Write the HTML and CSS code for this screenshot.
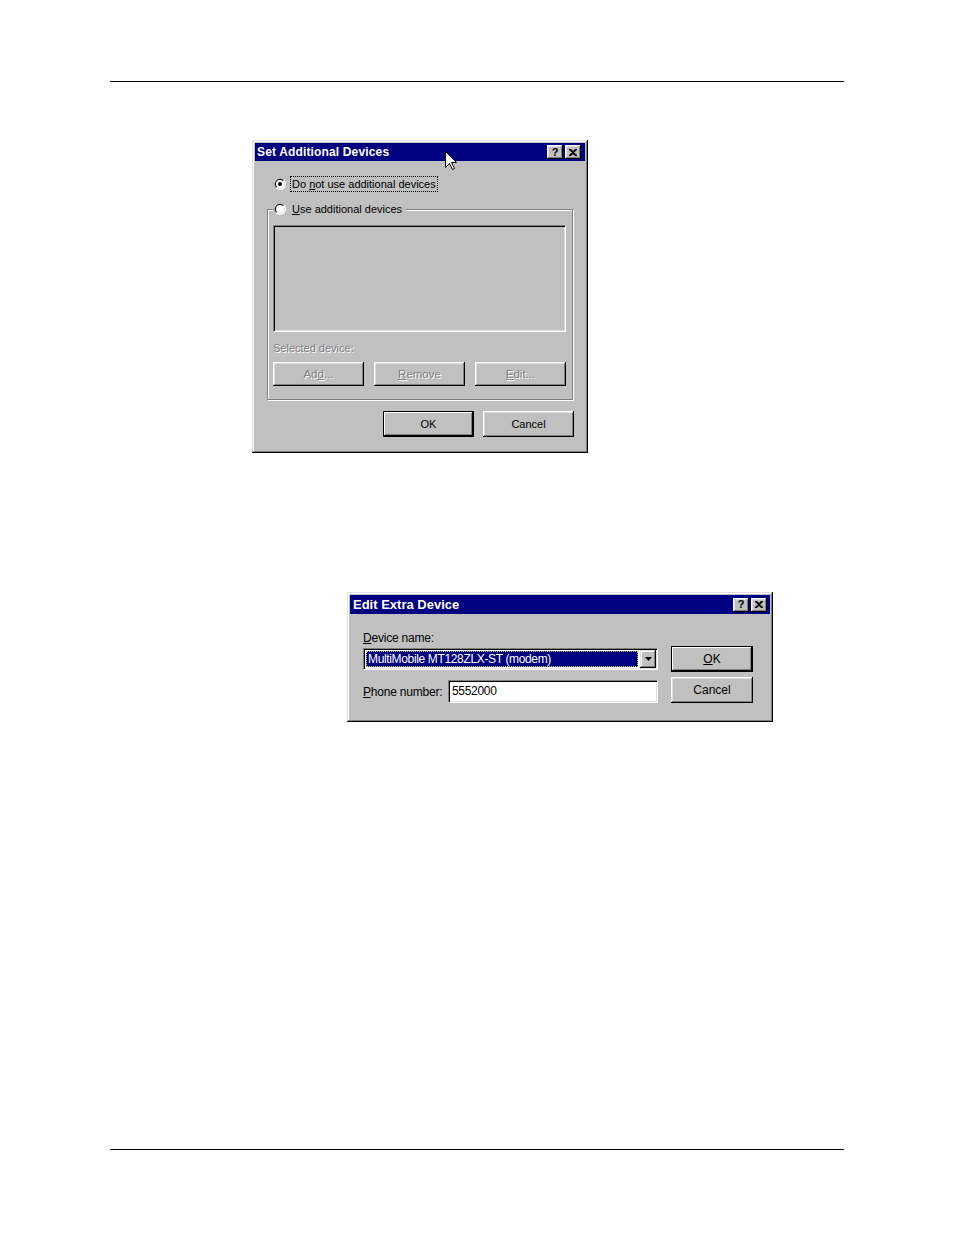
FILE: index.html
```html
<!DOCTYPE html>
<html>
<head>
<meta charset="utf-8">
<link rel="stylesheet" href="styles.css">
</head>
<body>
<div class="page">
  <div class="rule"></div>

  <div class="win win1">
    <div class="titlebar tb1">
      <span class="title">Set Additional Devices</span>
      <span class="tbtns">
        <span class="tbtn q">?</span>
        <span class="tbtn x"><svg width="8" height="7" viewBox="0 0 8 7"><path d="M0 0h2l2 2 2-2h2v1L5 3.5 8 6v1H6L4 5 2 7H0V6l3-2.5L0 1z" fill="#000"/></svg></span>
      </span>
    </div>
    <div class="body1">
      <div class="radio-row">
        <svg class="radio" width="12" height="12" viewBox="0 0 12 12"><circle cx="6" cy="6" r="6" fill="#fff"/><path d="M10.24 1.76A6 6 0 0 0 1.76 10.24Z" fill="#808080"/><circle cx="6" cy="6" r="5" fill="#dfdfdf"/><path d="M9.54 2.46A5 5 0 0 0 2.46 9.54Z" fill="#000"/><circle cx="6" cy="6" r="4" fill="#fff"/><circle cx="6" cy="6" r="2" fill="#000"/></svg>
        <span class="focus">Do <u>n</u>ot use additional devices</span>
      </div>
      <div class="group">
        <div class="legend">
          <svg class="radio" width="12" height="12" viewBox="0 0 12 12"><circle cx="6" cy="6" r="6" fill="#fff"/><path d="M10.24 1.76A6 6 0 0 0 1.76 10.24Z" fill="#808080"/><circle cx="6" cy="6" r="5" fill="#dfdfdf"/><path d="M9.54 2.46A5 5 0 0 0 2.46 9.54Z" fill="#000"/><circle cx="6" cy="6" r="4" fill="#fff"/></svg>
          <span class="lbl"><u>U</u>se additional devices</span>
        </div>
        <div class="listbox"></div>
        <div class="dis-label">Selected device:</div>
        <div class="btnrow">
          <div class="btn disabled">Ad<u>d</u>...</div>
          <div class="btn disabled"><u>R</u>emove</div>
          <div class="btn disabled"><u>E</u>dit...</div>
        </div>
      </div>
      <div class="actions">
        <div class="btn default">OK</div>
        <div class="btn">Cancel</div>
      </div>
    </div>
    <svg class="cursor" width="12" height="20" viewBox="0 0 12 20"><path d="M0.5 0.5V16.5L4.5 12.5L7.5 18.5L9.5 17.5L6.5 11.5H11.5Z" fill="#fff" stroke="#000" stroke-width="1"/></svg>
  </div>

  <div class="win win2">
    <div class="titlebar tb2">
      <span class="title">Edit Extra Device</span>
      <span class="tbtns">
        <span class="tbtn q">?</span>
        <span class="tbtn x"><svg width="8" height="7" viewBox="0 0 8 7"><path d="M0 0h2l2 2 2-2h2v1L5 3.5 8 6v1H6L4 5 2 7H0V6l3-2.5L0 1z" fill="#000"/></svg></span>
      </span>
    </div>
    <div class="body2">
      <div class="leftcol">
        <div class="label"><u>D</u>evice name:</div>
        <div class="combo">
          <div class="sel">MultiMobile MT128ZLX-ST (modem)</div>
          <div class="ddbtn"><svg width="7" height="4" viewBox="0 0 7 4"><path d="M0 0H7L3.5 4Z" fill="#000"/></svg></div>
        </div>
        <div class="phone-row">
          <div class="label plabel"><u>P</u>hone number:</div>
          <div class="input">5552000</div>
        </div>
      </div>
      <div class="rightcol">
        <div class="btn b2 default"><u>O</u>K</div>
        <div class="btn b2 cancel2">Cancel</div>
      </div>
    </div>
  </div>

  <div class="rule bottom"></div>
</div>
</body>
</html>
```

FILE: styles.css
```css
body {
  margin: 0;
  background: #fff;
  font-family: "Liberation Sans", Arial, sans-serif;
}

.page {
  padding-top: 81px;
}

.rule {
  margin-left: 110px;
  width: 734px;
  height: 1px;
  background: #000;
}

.rule.bottom {
  margin-top: 427px;
}

.win {
  position: relative;
  box-sizing: border-box;
  background: #c0c0c0;
  padding: 3px;
  box-shadow: inset -1px -1px #000, inset 1px 1px #dfdfdf, inset -2px -2px #808080, inset 2px 2px #fff;
}

.win1 {
  margin-left: 252px;
  margin-top: 58px;
  width: 336px;
  height: 313px;
}

.win2 {
  margin-left: 347px;
  margin-top: 139px;
  width: 426px;
  height: 130px;
}

.titlebar {
  background: #000080;
  color: #fff;
  display: flex;
  align-items: center;
  justify-content: space-between;
}

.tb1 {
  height: 18px;
  padding: 0 4px 0 2px;
}

.tb1 .title {
  font-size: 12px;
  font-weight: bold;
  letter-spacing: 0.15px;
}

.tb2 {
  height: 19px;
  padding: 0 3px 0 3px;
}

.tb2 .title {
  font-size: 13px;
  font-weight: bold;
}

.tbtns {
  display: flex;
  gap: 2px;
}

.tbtn {
  box-sizing: border-box;
  width: 16px;
  height: 14px;
  background: #c0c0c0;
  color: #000;
  display: flex;
  align-items: center;
  justify-content: center;
  font-size: 11px;
  font-weight: bold;
  box-shadow: inset -1px -1px #000, inset 1px 1px #fff, inset -2px -2px #808080, inset 2px 2px #dfdfdf;
}

.tbtn.q {
  padding-bottom: 1px;
}

.body1 {
  padding: 15px 12px 0 12px;
  font-size: 11px;
  color: #000;
}

.radio-row {
  display: flex;
  align-items: center;
  height: 16px;
  padding-left: 7px;
}

.radio {
  flex: none;
}

.focus {
  margin-left: 4px;
  border: 1px dotted #000;
  padding: 0 1px;
  line-height: 14px;
  white-space: nowrap;
}

.group {
  margin-top: 17px;
  border: 1px solid #808080;
  box-shadow: inset 1px 1px #fff, 1px 1px #fff;
  padding: 0 6px 13px 5px;
}

.legend {
  margin-top: -9px;
  height: 16px;
  display: flex;
  align-items: center;
  width: fit-content;
  background: #c0c0c0;
  padding: 0 4px 0 1px;
}

.legend .lbl {
  margin-left: 6px;
  line-height: 14px;
}

.listbox {
  margin-top: 8px;
  height: 107px;
  box-sizing: border-box;
  background: #c0c0c0;
  border: 1px solid;
  border-color: #808080 #fff #fff #808080;
  box-shadow: inset 1px 1px #000, inset -1px -1px #dfdfdf;
}

.dis-label {
  margin-top: 9px;
  line-height: 14px;
  color: #808080;
  text-shadow: 1px 1px #fff;
}

.btnrow {
  margin-top: 7px;
  display: flex;
  justify-content: space-between;
}

.btn {
  box-sizing: border-box;
  width: 91px;
  height: 24px;
  display: flex;
  align-items: center;
  justify-content: center;
  background: #c0c0c0;
  box-shadow: inset -1px -1px #000, inset 1px 1px #fff, inset -2px -2px #808080, inset 2px 2px #dfdfdf;
}

.btn.disabled {
  color: #808080;
  text-shadow: 1px 1px #fff;
  font-size: 11.5px;
}

.btn.default {
  border: 1px solid #000;
  box-shadow: inset -1px -1px #000, inset 1px 1px #fff, inset -2px -2px #808080;
}

.actions {
  margin-top: 11px;
  margin-right: -1px;
  display: flex;
  justify-content: flex-end;
  gap: 9px;
}

.actions .btn {
  height: 26px;
}

.cursor {
  position: absolute;
  left: 193px;
  top: 11px;
}

.body2 {
  display: flex;
  gap: 13px;
  padding: 17px 0 0 13px;
  font-size: 12px;
  color: #000;
}

.leftcol {
  width: 295px;
}

.label {
  line-height: 14px;
  letter-spacing: -0.2px;
  white-space: nowrap;
}

.combo {
  margin-top: 3px;
  height: 22px;
  box-sizing: border-box;
  background: #fff;
  border: 1px solid;
  border-color: #808080 #fff #fff #808080;
  box-shadow: inset 1px 1px #000, inset -1px -1px #dfdfdf;
  padding: 1px;
  display: flex;
  align-items: stretch;
}

.sel {
  flex: 1;
  margin: 1px 2px 1px 1px;
  background: #000080;
  color: #fff;
  outline: 1px dotted #c8c860;
  outline-offset: -1px;
  padding-left: 2px;
  line-height: 16px;
  letter-spacing: -0.35px;
  white-space: nowrap;
}

.ddbtn {
  box-sizing: border-box;
  width: 16px;
  display: flex;
  align-items: center;
  justify-content: center;
  background: #c0c0c0;
  box-shadow: inset -1px -1px #000, inset 1px 1px #dfdfdf, inset -2px -2px #808080, inset 2px 2px #fff;
}

.phone-row {
  margin-top: 10px;
  display: flex;
  align-items: center;
}

.plabel {
  width: 85px;
  flex: none;
}

.input {
  flex: 1;
  height: 23px;
  box-sizing: border-box;
  background: #fff;
  border: 1px solid;
  border-color: #808080 #fff #fff #808080;
  box-shadow: inset 1px 1px #000, inset -1px -1px #dfdfdf;
  padding-left: 3px;
  line-height: 21px;
  letter-spacing: -0.3px;
}

.rightcol {
  width: 82px;
  display: flex;
  flex-direction: column;
}

.btn.b2 {
  width: 82px;
  height: 26px;
}

.rightcol .default {
  margin-top: 15px;
}

.cancel2 {
  margin-top: 5px;
}
```
